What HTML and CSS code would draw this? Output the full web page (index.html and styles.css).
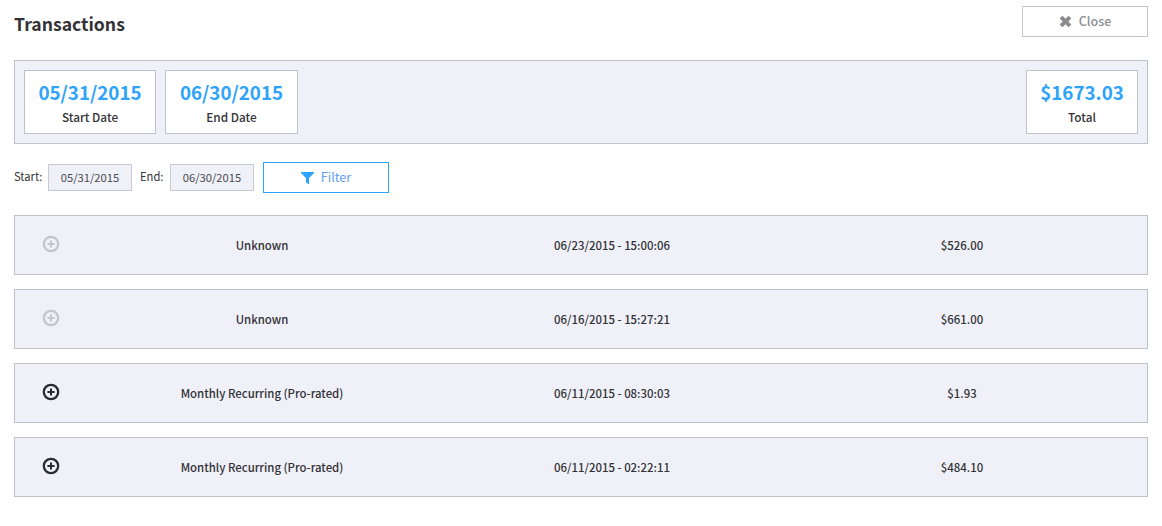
FILE: index.html
```html
<!DOCTYPE html>
<html lang="en">
<head>
<meta charset="utf-8">
<title>Transactions</title>
<link rel="stylesheet" href="styles.css">
</head>
<body>
<main class="page">
  <header class="head">
    <h1 class="title">Transactions</h1>
    <button class="close" type="button">
      <svg class="close-icon" viewBox="0 0 12 12" width="13" height="13"><path d="M.6 3.2 3.2.6 6 3.4 8.8.6 11.4 3.2 8.6 6 11.4 8.8 8.8 11.4 6 8.6 3.2 11.4.6 8.8 3.4 6Z"/></svg>
      Close
    </button>
  </header>

  <section class="summary">
    <div class="stat stat-start"><div class="stat-value">05/31/2015</div><div class="stat-label">Start Date</div></div>
    <div class="stat stat-end"><div class="stat-value">06/30/2015</div><div class="stat-label">End Date</div></div>
    <div class="stat stat-total"><div class="stat-value">$1673.03</div><div class="stat-label">Total</div></div>
  </section>

  <form class="filters">
    <label class="lbl">Start:</label>
    <div class="date">05/31/2015</div>
    <label class="lbl lbl-end">End:</label>
    <div class="date">06/30/2015</div>
    <button class="filter" type="button">
      <svg class="filter-icon" viewBox="0 0 13 13" width="13" height="14"><path d="M0 .5H13V1.5L8 6.6V13L5 11V6.6L0 1.5Z"/></svg>
      Filter
    </button>
  </form>

  <div class="rows">
    <div class="row off">
      <svg class="plus" viewBox="0 0 18 18" width="18" height="18"><circle cx="9" cy="9" r="7.2"/><path class="cross" d="M9 5.4V12.6M5.4 9H12.6"/></svg>
      <span class="cell">Unknown</span><span class="cell">06/23/2015 - 15:00:06</span><span class="cell">$526.00</span>
    </div>
    <div class="row off">
      <svg class="plus" viewBox="0 0 18 18" width="18" height="18"><circle cx="9" cy="9" r="7.2"/><path class="cross" d="M9 5.4V12.6M5.4 9H12.6"/></svg>
      <span class="cell">Unknown</span><span class="cell">06/16/2015 - 15:27:21</span><span class="cell">$661.00</span>
    </div>
    <div class="row">
      <svg class="plus" viewBox="0 0 18 18" width="18" height="18"><circle cx="9" cy="9" r="7.2"/><path class="cross" d="M9 5.4V12.6M5.4 9H12.6"/></svg>
      <span class="cell">Monthly Recurring (Pro-rated)</span><span class="cell">06/11/2015 - 08:30:03</span><span class="cell">$1.93</span>
    </div>
    <div class="row">
      <svg class="plus" viewBox="0 0 18 18" width="18" height="18"><circle cx="9" cy="9" r="7.2"/><path class="cross" d="M9 5.4V12.6M5.4 9H12.6"/></svg>
      <span class="cell">Monthly Recurring (Pro-rated)</span><span class="cell">06/11/2015 - 02:22:11</span><span class="cell">$484.10</span>
    </div>
  </div>
</main>
</body>
</html>
```
FILE: styles.css
```css
* { box-sizing: border-box; }
html, body { margin: 0; padding: 0; background: #fff; }
body {
  font-family: "Noto Sans CJK SC", "Noto Sans", sans-serif;
  color: #2f2f33;
}
.page { padding: 6px 14px 0; }

.head { display: flex; justify-content: space-between; align-items: flex-start; height: 54px; }
.title { margin: 6px 0 0; font-size: 17.6px; line-height: 24px; font-weight: 700; color: #333236; }
.close {
  width: 126px; height: 31px; border: 1px solid #c4c4cc; background: #fff;
  display: flex; align-items: center; justify-content: center; gap: 7px; padding: 0 0 2px;
  font: 500 12.5px/20px "Noto Sans CJK SC", sans-serif; color: #8e8e93;
}
.close-icon { fill: #8a8a8f; margin-top: 2px; }

.summary {
  display: flex; gap: 9px; height: 84px; padding: 9px;
  background: #eff0f8; border: 1px solid #c1c1cb;
}
.stat {
  height: 64px; background: #fff; border: 1px solid #c1c1cb;
  display: flex; flex-direction: column; align-items: center; padding-top: 6px;
}
.stat-start { width: 132px; }
.stat-end { width: 133px; }
.stat-total { width: 112px; margin-left: auto; }
.stat-value { font-size: 18.8px; line-height: 30px; font-weight: 700; color: #2ea3fb; }
.stat-label { margin-top: 2px; font-size: 11.8px; line-height: 16px; font-weight: 500; color: #333236; }

.filters { display: flex; align-items: center; height: 31px; margin-top: 18px; }
.lbl { font-size: 11.2px; line-height: 16px; margin-top: -4px; width: 34px; color: #333236; }
.lbl-end { width: 30px; margin-left: 8px; }
.date {
  width: 84px; height: 27px; padding-bottom: 1px; background: #eff0f8; border: 1px solid #c9c9cf;
  display: flex; align-items: center; justify-content: center;
  font-size: 11.2px; color: #4a4a50;
}
.filter {
  width: 126px; height: 31px; margin-left: 9px; padding: 0 0 1px; background: #fff;
  border: 1px solid #2ea3fb; display: flex; align-items: center; justify-content: center; gap: 7px;
  font: 400 12.6px/20px "Noto Sans CJK SC", sans-serif; color: #5f9cf2;
}
.filter-icon { fill: #2ea3fb; margin-top: 1px; }

.rows { display: flex; flex-direction: column; gap: 14px; margin-top: 22px; }
.row {
  display: grid; grid-template-columns: 72px 350px 350px 350px; align-items: center;
  height: 60px; padding-bottom: 1px; background: #eff0f8; border: 1px solid #c1c1cb;
}
.cell { text-align: center; font-size: 11.4px; line-height: 16px; font-weight: 500; color: #333236; }
.plus { justify-self: center; margin-top: -2px; fill: none; stroke: #2b2b30; stroke-width: 2.3; }
.plus .cross { stroke-width: 2; }
.off .plus { stroke: #c6c6ca; }
```
